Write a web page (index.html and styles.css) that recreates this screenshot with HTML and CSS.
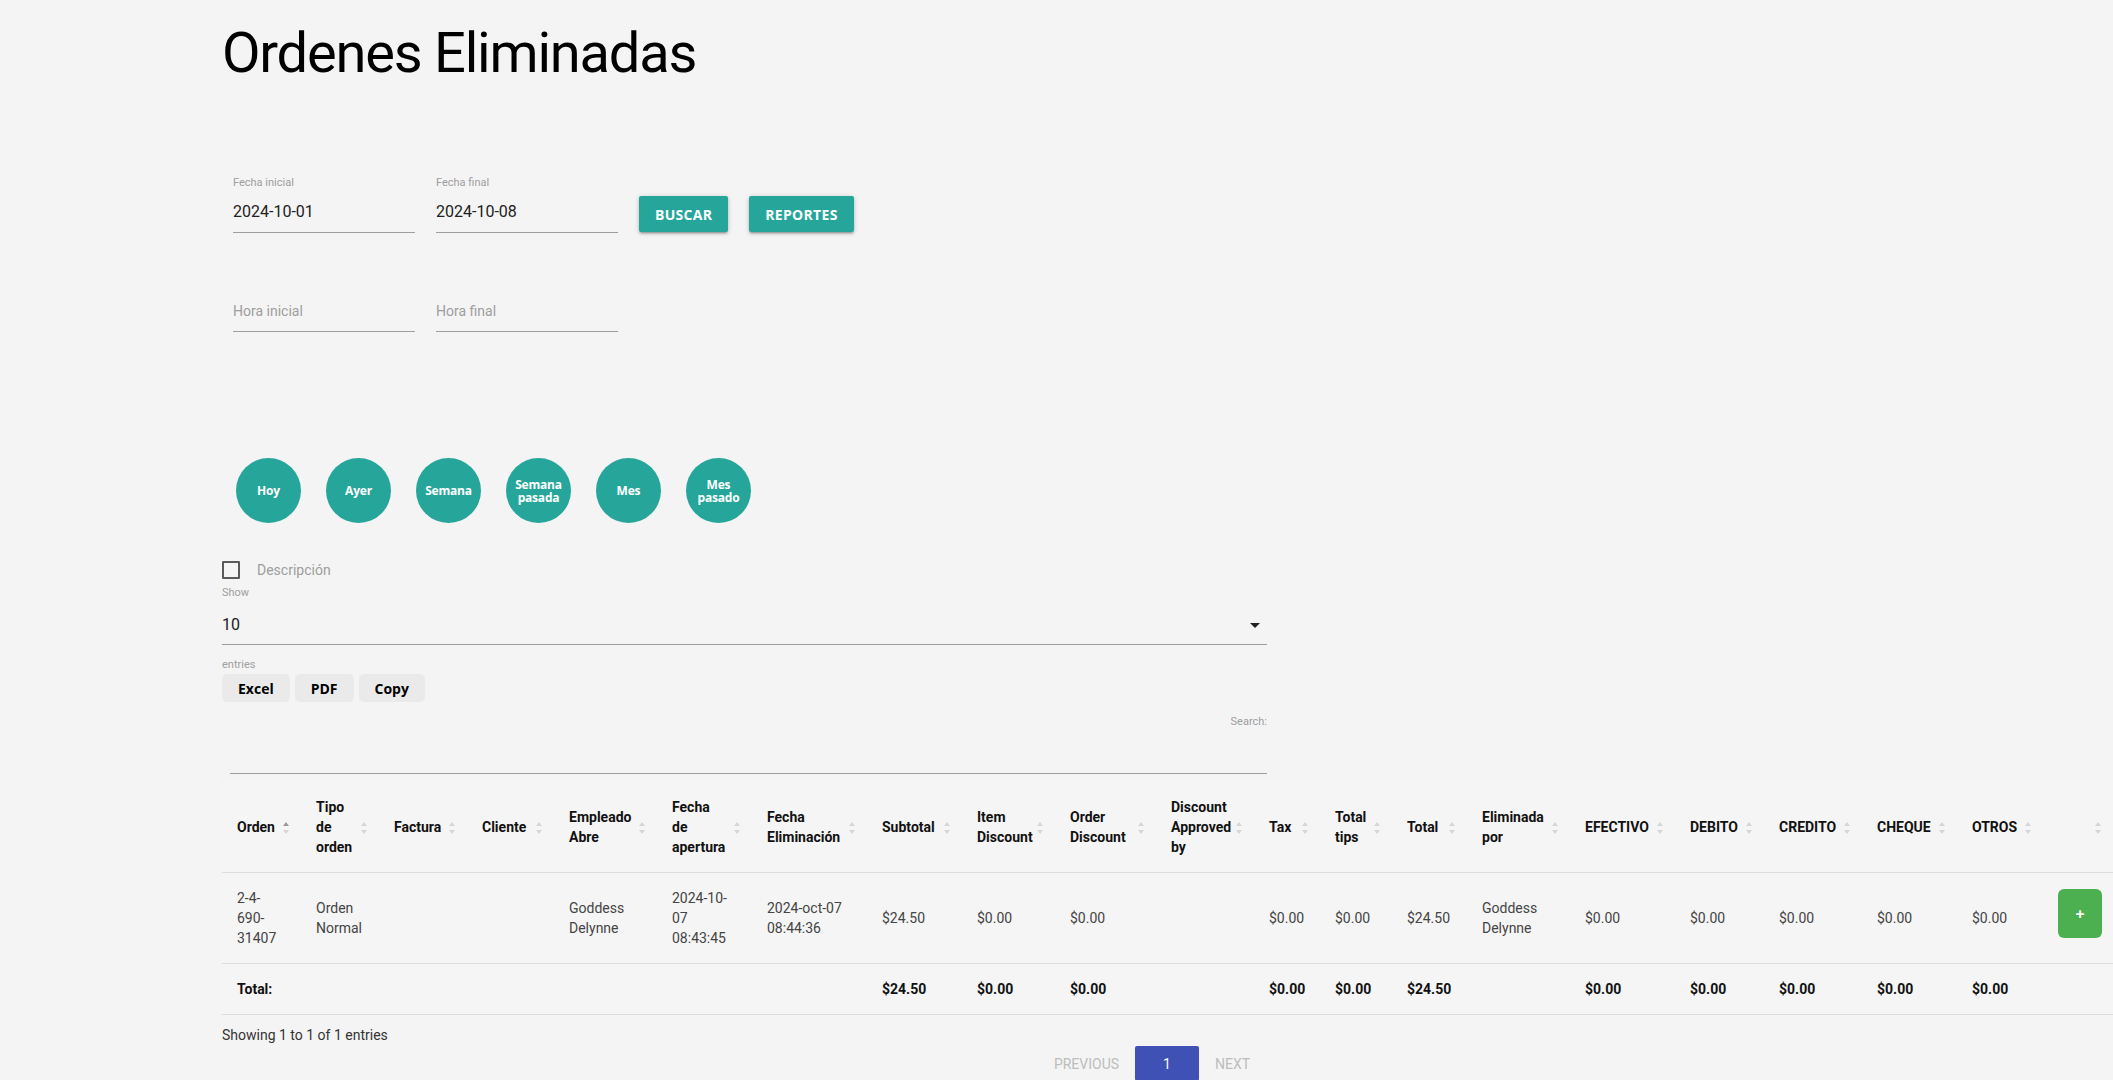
FILE: index.html
```html
<!DOCTYPE html>
<html lang="es">
<head>
<meta charset="utf-8">
<title>Ordenes Eliminadas</title>
<link rel="stylesheet" href="styles.css">
</head>
<body>
<main class="page">
  <h1 class="title">Ordenes Eliminadas</h1>

  <section class="filters">
    <div class="filter-row">
      <div class="field">
        <span class="field-label">Fecha inicial</span>
        <span class="field-value">2024-10-01</span>
      </div>
      <div class="field">
        <span class="field-label">Fecha final</span>
        <span class="field-value">2024-10-08</span>
      </div>
      <button class="btn">BUSCAR</button>
      <button class="btn">REPORTES</button>
    </div>
    <div class="filter-row filter-row-time">
      <div class="field">
        <span class="field-label"></span>
        <span class="field-value placeholder">Hora inicial</span>
      </div>
      <div class="field">
        <span class="field-label"></span>
        <span class="field-value placeholder">Hora final</span>
      </div>
    </div>
  </section>

  <div class="quick-ranges">
    <button class="round">Hoy</button>
    <button class="round">Ayer</button>
    <button class="round">Semana</button>
    <button class="round">Semana<br>pasada</button>
    <button class="round">Mes</button>
    <button class="round">Mes<br>pasado</button>
  </div>

  <label class="check"><span class="check-box"></span><span class="check-text">Descripción</span></label>

  <div class="dt">
    <div class="dt-controls">
      <div class="small-label">Show</div>
      <div class="select"><span>10</span><span class="caret"></span></div>
      <div class="small-label entries">entries</div>
      <div class="dt-buttons">
        <button class="dt-btn">Excel</button>
        <button class="dt-btn">PDF</button>
        <button class="dt-btn">Copy</button>
      </div>
      <div class="small-label search-label">Search:</div>
      <div class="search-input"></div>
    </div>

    <table class="grid">
      <colgroup>
        <col class="col-orden"><col class="col-tipo"><col class="col-factura"><col class="col-cliente">
        <col class="col-empleado"><col class="col-apertura"><col class="col-eliminacion"><col class="col-subtotal">
        <col class="col-item"><col class="col-order"><col class="col-approved"><col class="col-tax">
        <col class="col-tips"><col class="col-total"><col class="col-elimpor"><col class="col-efectivo">
        <col class="col-debito"><col class="col-credito"><col class="col-cheque"><col class="col-otros">
        <col class="col-action">
      </colgroup>
      <thead>
        <tr>
          <th>Orden<span class="sort asc"></span></th>
          <th>Tipo<br>de<br>orden<span class="sort"></span></th>
          <th>Factura<span class="sort"></span></th>
          <th>Cliente<span class="sort"></span></th>
          <th>Empleado<br>Abre<span class="sort"></span></th>
          <th>Fecha<br>de<br>apertura<span class="sort"></span></th>
          <th>Fecha<br>Eliminación<span class="sort"></span></th>
          <th>Subtotal<span class="sort"></span></th>
          <th>Item<br>Discount<span class="sort"></span></th>
          <th>Order<br>Discount<span class="sort"></span></th>
          <th>Discount<br>Approved<br>by<span class="sort"></span></th>
          <th>Tax<span class="sort"></span></th>
          <th>Total<br>tips<span class="sort"></span></th>
          <th>Total<span class="sort"></span></th>
          <th>Eliminada<br>por<span class="sort"></span></th>
          <th>EFECTIVO<span class="sort"></span></th>
          <th>DEBITO<span class="sort"></span></th>
          <th>CREDITO<span class="sort"></span></th>
          <th>CHEQUE<span class="sort"></span></th>
          <th>OTROS<span class="sort"></span></th>
          <th><span class="sort"></span></th>
        </tr>
      </thead>
      <tbody>
        <tr>
          <td>2-4-<br>690-<br>31407</td>
          <td>Orden<br>Normal</td>
          <td></td>
          <td></td>
          <td>Goddess<br>Delynne</td>
          <td>2024-10-<br>07<br>08:43:45</td>
          <td>2024-oct-07<br>08:44:36</td>
          <td>$24.50</td>
          <td>$0.00</td>
          <td>$0.00</td>
          <td></td>
          <td>$0.00</td>
          <td>$0.00</td>
          <td>$24.50</td>
          <td>Goddess<br>Delynne</td>
          <td>$0.00</td>
          <td>$0.00</td>
          <td>$0.00</td>
          <td>$0.00</td>
          <td>$0.00</td>
          <td><button class="add-btn">+</button></td>
        </tr>
      </tbody>
      <tfoot>
        <tr>
          <th>Total:</th>
          <th></th><th></th><th></th><th></th><th></th><th></th>
          <th>$24.50</th>
          <th>$0.00</th>
          <th>$0.00</th>
          <th></th>
          <th>$0.00</th>
          <th>$0.00</th>
          <th>$24.50</th>
          <th></th>
          <th>$0.00</th>
          <th>$0.00</th>
          <th>$0.00</th>
          <th>$0.00</th>
          <th>$0.00</th>
          <th></th>
        </tr>
      </tfoot>
    </table>

    <div class="dt-info">Showing 1 to 1 of 1 entries</div>
    <nav class="dt-paging">
      <span class="page-link disabled">PREVIOUS</span>
      <span class="page-link current">1</span>
      <span class="page-link disabled">NEXT</span>
    </nav>
  </div>
</main>
</body>
</html>
```

FILE: styles.css
```css
html, body {
  margin: 0;
  padding: 0;
  background: #f4f4f4;
  overflow: hidden;
}

body {
  font-family: Roboto, "Liberation Sans", sans-serif;
  color: rgba(0, 0, 0, 0.87);
}

.page {
  padding-left: 222px;
}

.title {
  margin: 21px 0 0;
  font-size: 56px;
  line-height: 64px;
  font-weight: 400;
  letter-spacing: -1.2px;
  color: #000;
}

/* ---------- filters ---------- */
.filters {
  margin-top: 91px;
  padding-left: 11px;
}

.filter-row {
  display: flex;
  align-items: flex-end;
  gap: 21px;
}

.filter-row-time {
  margin-top: 42px;
}

.field {
  width: 182px;
  display: flex;
  flex-direction: column;
}

.field-label {
  display: block;
  height: 14px;
  font-size: 11px;
  line-height: 14px;
  color: #9e9e9e;
}

.field-value {
  display: block;
  margin-top: 12px;
  padding-bottom: 10px;
  font-size: 16px;
  line-height: 20px;
  color: #212121;
  border-bottom: 1px solid #9e9e9e;
}

.field-value.placeholder {
  font-size: 14px;
  color: #9e9e9e;
}

.btn {
  height: 36px;
  padding: 0 16px;
  margin-bottom: 1px;
  border: none;
  border-radius: 2px;
  background: #26a69a;
  color: #fff;
  font-family: "Open Sans", sans-serif;
  font-weight: 700;
  font-size: 14px;
  letter-spacing: 0.3px;
  box-shadow: 0 2px 2px 0 rgba(0, 0, 0, 0.14), 0 3px 1px -2px rgba(0, 0, 0, 0.12), 0 1px 5px 0 rgba(0, 0, 0, 0.2);
}

/* ---------- quick ranges ---------- */
.quick-ranges {
  margin-top: 126px;
  padding-left: 14px;
  display: flex;
  gap: 25px;
}

.round {
  width: 65px;
  height: 65px;
  padding: 0;
  border: none;
  border-radius: 50%;
  background: #26a69a;
  color: #fff;
  font-family: "Open Sans", sans-serif;
  font-weight: 700;
  font-size: 12px;
  line-height: 13px;
  letter-spacing: -0.2px;
  display: flex;
  align-items: center;
  justify-content: center;
  text-align: center;
}

/* ---------- checkbox ---------- */
.check {
  margin-top: 37px;
  height: 20px;
  display: flex;
  align-items: center;
  gap: 17px;
}

.check-box {
  width: 14px;
  height: 14px;
  border: 2px solid #5a5a5a;
  border-radius: 1px;
}

.check-text {
  font-size: 14px;
  line-height: 20px;
  color: #9e9e9e;
}

/* ---------- datatable controls ---------- */
.dt {
  margin-top: 6px;
}

.dt-controls {
  width: 1045px;
}

.small-label {
  font-size: 11px;
  line-height: 14px;
  color: #9e9e9e;
}

.select {
  display: flex;
  align-items: center;
  justify-content: space-between;
  padding: 15px 7px 9px 0;
  font-size: 16px;
  line-height: 20px;
  color: #212121;
  border-bottom: 1px solid #9e9e9e;
}

.caret {
  width: 0;
  height: 0;
  border-left: 5px solid transparent;
  border-right: 5px solid transparent;
  border-top: 5px solid #212121;
}

.entries {
  margin-top: 13px;
}

.dt-buttons {
  margin-top: 2px;
  display: flex;
  gap: 5px;
}

.dt-btn {
  height: 28px;
  padding: 0 16px;
  border: none;
  border-radius: 5px;
  background: #eaeaea;
  color: #000;
  font-family: "Open Sans", sans-serif;
  font-weight: 700;
  font-size: 14px;
}

.search-label {
  margin-top: 13px;
  text-align: right;
}

.search-input {
  margin-left: 8px;
  height: 44px;
  border-bottom: 1px solid #9e9e9e;
}

/* ---------- table ---------- */
.grid {
  margin-top: 8px;
  width: 1891px;
  table-layout: fixed;
  border-collapse: collapse;
  background: #f5f5f5;
  font-size: 14px;
  line-height: 20px;
}

.col-orden { width: 79px; }
.col-tipo { width: 78px; }
.col-factura { width: 88px; }
.col-cliente { width: 87px; }
.col-empleado { width: 103px; }
.col-apertura { width: 95px; }
.col-eliminacion { width: 115px; }
.col-subtotal { width: 95px; }
.col-item { width: 93px; }
.col-order { width: 101px; }
.col-approved { width: 98px; }
.col-tax { width: 66px; }
.col-tips { width: 72px; }
.col-total { width: 75px; }
.col-elimpor { width: 103px; }
.col-efectivo { width: 105px; }
.col-debito { width: 89px; }
.col-credito { width: 98px; }
.col-cheque { width: 95px; }
.col-otros { width: 86px; }
.col-action { width: 70px; }

.grid tr {
  border-bottom: 1px solid #dcdcdc;
}

.grid th,
.grid td {
  padding: 15px 5px 15px 15px;
  text-align: left;
  vertical-align: middle;
  white-space: nowrap;
}

.grid th {
  font-weight: 700;
  color: #111;
}

.grid thead th {
  position: relative;
}

.grid td {
  font-weight: 400;
  color: #444;
}

.sort {
  position: absolute;
  right: 12px;
  top: 50%;
  width: 6px;
  height: 12px;
  margin-top: -5px;
}

.sort::before,
.sort::after {
  content: "";
  position: absolute;
  left: 0;
  width: 0;
  height: 0;
  border-left: 3px solid transparent;
  border-right: 3px solid transparent;
}

.sort::before {
  top: 0;
  border-bottom: 4px solid #d6d6d6;
}

.sort::after {
  bottom: 0;
  border-top: 4px solid #d6d6d6;
}

.sort.asc::before {
  border-bottom-color: #9a9a9a;
}

.add-btn {
  display: block;
  width: 44px;
  height: 49px;
  margin-bottom: 9px;
  padding: 0;
  border: none;
  border-radius: 6px;
  background: #4caf50;
  color: #fff;
  font-family: "Open Sans", sans-serif;
  font-weight: 700;
  font-size: 16px;
}

/* ---------- footer ---------- */
.dt-info {
  margin-top: 10px;
  font-size: 14px;
  line-height: 20px;
  color: #333;
}

.dt-paging {
  margin-top: 1px;
  width: 1891px;
  padding-right: 31px;
  box-sizing: border-box;
  display: flex;
  justify-content: center;
}

.page-link {
  height: 35px;
  padding: 0 16px;
  display: flex;
  align-items: center;
  font-size: 14px;
}

.page-link.disabled {
  color: #bdbdbd;
}

.page-link.current {
  width: 64px;
  padding: 0;
  justify-content: center;
  background: #3f51b5;
  color: #fff;
  border-radius: 2px;
}
```
